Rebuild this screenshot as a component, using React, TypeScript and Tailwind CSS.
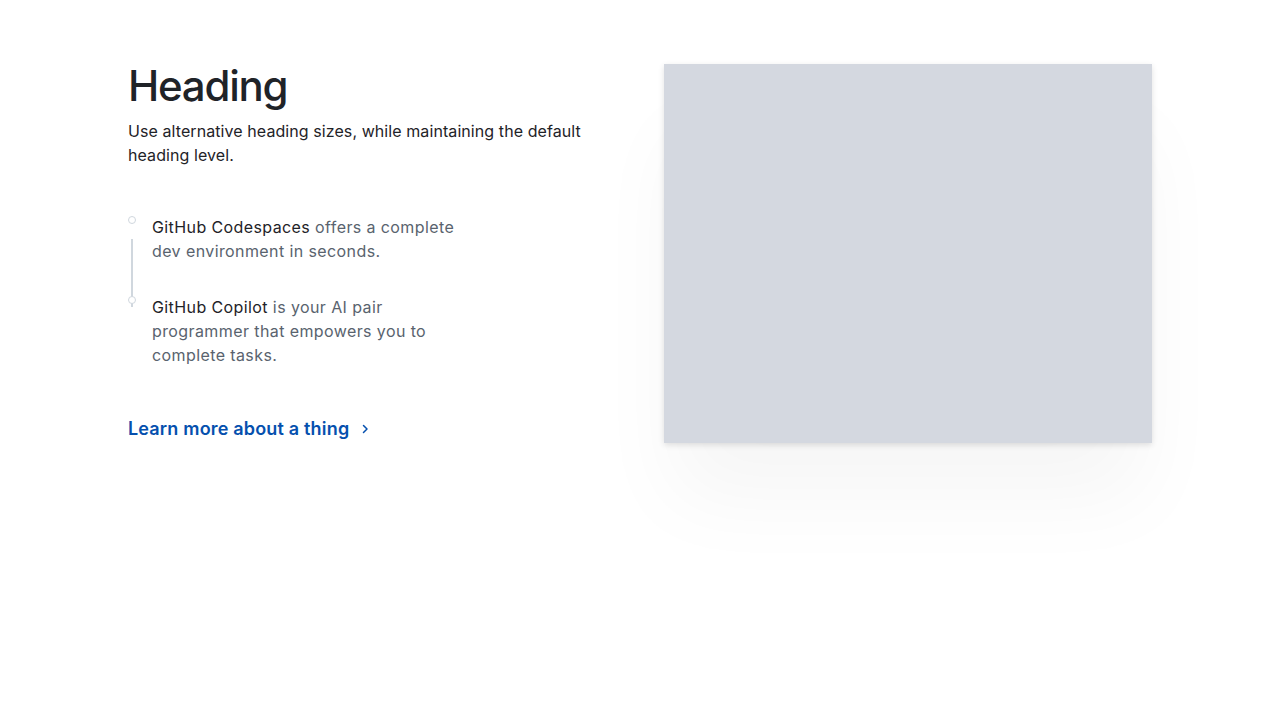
import React from 'react';

interface TimelineItem {
  title: string;
  body: string;
}

const items: TimelineItem[] = [
  { title: 'GitHub Codespaces', body: 'offers a complete dev environment in seconds.' },
  { title: 'GitHub Copilot', body: 'is your AI pair programmer that empowers you to complete tasks.' },
];

const App: React.FC = () => {
  return (
    <div className="min-h-screen bg-white font-['Inter',sans-serif] text-[#1f2328]">
      <section className="mx-auto flex w-[1024px] gap-16 pt-16">
        <div className="w-[472px] shrink-0">
          <h2 className="text-[42px] font-medium leading-[43px] tracking-[-0.03em]">Heading</h2>
          <p className="mt-3 text-base leading-6 tracking-[0.005em]">
            Use alternative heading sizes, while maintaining the default heading level.
          </p>

          <div className="relative mt-12 w-[330px]">
            {/* timeline rail */}
            <div className="absolute left-[3px] top-[24px] h-[68px] w-[2px] bg-[#d0d7de]" />
            <ul className="flex flex-col gap-8">
              {items.map((item, i) => (
                <li key={i} className="relative pl-6">
                  <span className="absolute left-0 top-[1px] h-2 w-2 rounded-full border border-[#d0d7de] bg-white" />
                  <p className="text-base leading-6 tracking-[0.025em] text-[#59636e]">
                    <span className="text-[#1f2328]">{item.title}</span> {item.body}
                  </p>
                </li>
              ))}
            </ul>
          </div>

          <a href="#" className="mt-12 inline-flex items-center gap-[10px] text-lg font-semibold tracking-[0.01em] text-[#0550ae]">
            Learn more about a thing
            <svg width="12" height="12" viewBox="0 0 12 12" fill="none" stroke="currentColor" strokeWidth="1.5" strokeLinecap="round" strokeLinejoin="round">
              <path d="M4.5 2.5 8 6l-3.5 3.5" />
            </svg>
          </a>
        </div>

        <div className="h-[379px] w-[488px] shrink-0 bg-[#d4d8e0] shadow-[0_2px_6px_rgba(0,0,0,0.12),0_64px_80px_-8px_rgba(0,0,0,0.04)]" />
      </section>
    </div>
  );
};

export default App;
